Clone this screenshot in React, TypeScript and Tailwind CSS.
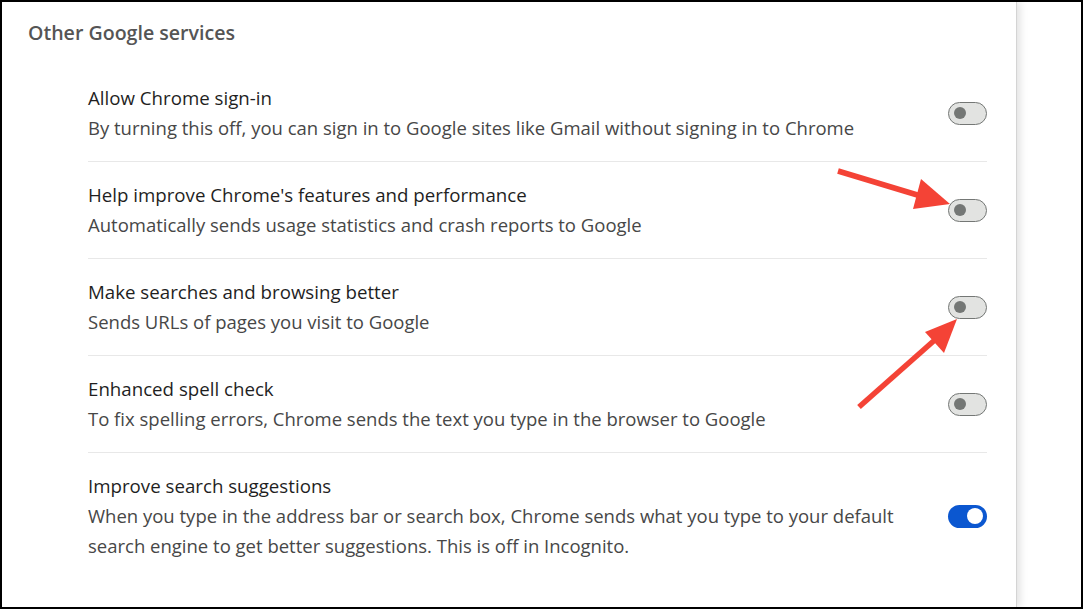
import React from "react";

const rows = [
  {
    title: "Allow Chrome sign-in",
    desc: "By turning this off, you can sign in to Google sites like Gmail without signing in to Chrome",
    on: false,
  },
  {
    title: "Help improve Chrome's features and performance",
    desc: "Automatically sends usage statistics and crash reports to Google",
    on: false,
  },
  {
    title: "Make searches and browsing better",
    desc: "Sends URLs of pages you visit to Google",
    on: false,
  },
  {
    title: "Enhanced spell check",
    desc: "To fix spelling errors, Chrome sends the text you type in the browser to Google",
    on: false,
  },
  {
    title: "Improve search suggestions",
    desc: "When you type in the address bar or search box, Chrome sends what you type to your default search engine to get better suggestions. This is off in Incognito.",
    on: true,
  },
];

function Toggle({ on }: { on: boolean }) {
  if (on) {
    return (
      <div className="relative w-[39px] h-[23px] rounded-full bg-[#0b57d0] shrink-0">
        <div className="absolute left-[19px] top-[3.5px] w-[16px] h-[16px] rounded-full bg-white" />
      </div>
    );
  }
  return (
    <div className="relative w-[39px] h-[23px] rounded-full bg-[#e2e3e1] border border-[#747775] shrink-0">
      <div className="absolute left-[5px] top-[4.5px] w-[12px] h-[12px] rounded-full bg-[#747775]" />
    </div>
  );
}

export default function App() {
  return (
    <div
      className="relative w-[1083px] h-[609px] border-2 border-black bg-white flex overflow-hidden"
      style={{ fontFamily: '"Open Sans", "Noto Sans", sans-serif' }}
    >
      <div className="w-[1015px] h-full bg-white border-r border-[#d4d4d4] shadow-[3px_0_8px_rgba(0,0,0,0.12)] shrink-0 z-10">
        <div className="pt-[16px] pl-[26px] text-[19.6px] leading-[30px] font-semibold text-[#555555]">
          Other Google services
        </div>
        <div className="mt-[17px] ml-[86px] mr-[29px] flex flex-col">
          {rows.map((r, i) => (
            <div
              key={i}
              className={
                "flex items-center justify-between py-[18px] " +
                (i > 0 ? "border-t border-[#e8e8e8]" : "")
              }
            >
              <div className="w-[845px]">
                <div className="text-[18.7px] leading-[30px] text-[#1f1f1f]">{r.title}</div>
                <div className="text-[18.5px] leading-[30px] text-[#474747]">{r.desc}</div>
              </div>
              <Toggle on={r.on} />
            </div>
          ))}
        </div>
      </div>
      <div className="flex-1 bg-white" />
      <svg
        className="absolute left-0 top-0 pointer-events-none z-20"
        width="1083"
        height="609"
        viewBox="0 0 1083 609"
      >
        <line x1="836" y1="169" x2="922" y2="195" stroke="#f44336" strokeWidth="5.5" />
        <polygon points="948,202 919,177 911,207" fill="#f44336" />
        <line x1="857" y1="405" x2="935" y2="336" stroke="#f44336" strokeWidth="5.5" />
        <polygon points="955,317 923,330 942,351" fill="#f44336" />
      </svg>
    </div>
  );
}
